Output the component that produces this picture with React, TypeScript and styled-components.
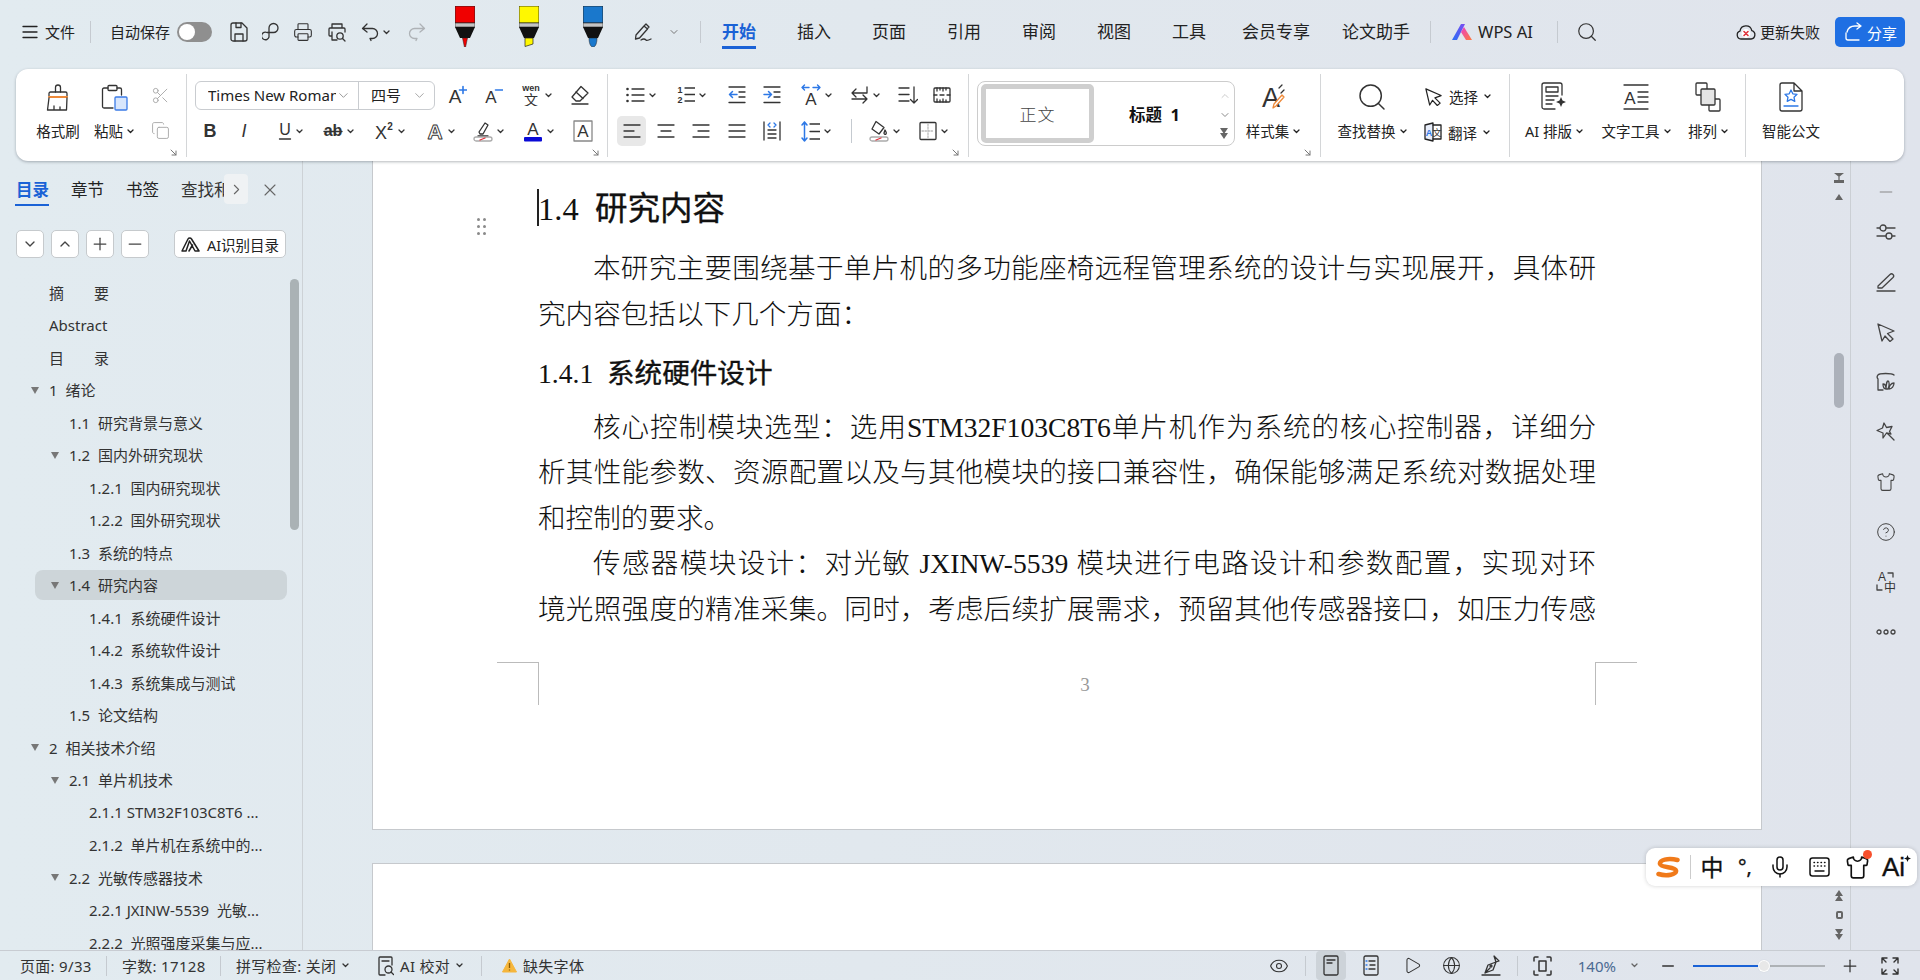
import React from 'react';
import styled, { createGlobalStyle } from 'styled-components';
import {
  ChevronDown,
  ChevronRight,
  ChevronUp,
  CircleHelp,
  Copy,
  Eye,
  Globe,
  Mic,
  Minus,
  Play,
  Plus,
  Printer,
  Scissors,
  Search,
  Shirt,
  X,
} from 'lucide-react';

const SANS = '"Noto Sans", "Noto Sans CJK SC", sans-serif';
const SERIF = '"Liberation Serif", "Noto Sans CJK SC", serif';
const INK = '#333';
const BLUE = '#1a62d6';

const GlobalStyle = createGlobalStyle`
  html, body { margin: 0; padding: 0; height: 100%; overflow: hidden; }
  body { font-family: ${SANS}; color: ${INK}; }
  #root { height: 100%; }
`;

/* ---------- icons ---------- */

const Svg = styled.svg`
  display: block;
  flex-shrink: 0;
  fill: none;
  stroke: currentColor;
  stroke-width: 1.3;
  stroke-linecap: round;
  stroke-linejoin: round;
`;

type IcProps = { w?: number; h?: number; vb?: string; children: React.ReactNode };
const Ic = ({ w = 20, h, vb, children }: IcProps) => (
  <Svg width={w} height={h ?? w} viewBox={vb ?? `0 0 ${w} ${h ?? w}`}>
    {children}
  </Svg>
);

const Glyph = ({ x, y, s = 16, c = INK, w = 400, i, children, o }: {
  x: number; y: number; s?: number; c?: string; w?: number; i?: boolean; o?: boolean; children: React.ReactNode;
}) => (
  <text
    x={x}
    y={y}
    fontSize={s}
    fontWeight={w}
    fontStyle={i ? 'italic' : 'normal'}
    fontFamily='"Liberation Sans", "Noto Sans CJK SC", sans-serif'
    fill={o ? 'none' : c}
    stroke={o ? c : 'none'}
    strokeWidth={o ? 0.9 : 0}
    textAnchor="middle"
  >
    {children}
  </text>
);

const Caret = () => (
  <Ic w={7} h={5}>
    <path d="M1 1l2.5 2.5L6 1" />
  </Ic>
);

const MenuIcon = () => (
  <Ic w={16} h={14}>
    <path d="M1 1.5h14M1 7h14M1 12.500h14" />
  </Ic>
);
const SaveIcon = () => (
  <Ic w={18} h={20}>
    <path d="M3 1h9l5 5v11a2 2 0 0 1-2 2H3a2 2 0 0 1-2-2V3a2 2 0 0 1 2-2z" />
    <path d="M6 1v4.500h5V1M5 19v-7h8v7" />
  </Ic>
);
const KeyIcon = () => (
  <Ic w={18} h={20}>
    <path d="M7 15V6a4.500 4.500 0 1 1 4.500 4.500H5a3.800 3.800 0 1 0 2 4.500" />
  </Ic>
);
const PreviewIcon = () => (
  <Ic w={18} h={20}>
    <path d="M4 6V2h10v4M4 14H2a1 1 0 0 1-1-1V7a1 1 0 0 1 1-1h14a1 1 0 0 1 1 1v3M4 10v8h5" />
    <circle cx="12" cy="14" r="3.200" />
    <path d="M14.500 16.500l2.500 2.500" />
  </Ic>
);
const UndoIcon = () => (
  <Ic w={18} h={20}>
    <path d="M6 2L1.500 6.500 6 10M1.500 6.500h10a5 5 0 0 1 0 10H9l1 2" />
  </Ic>
);
const RedoIcon = () => (
  <Ic w={18} h={20}>
    <path d="M12 2l4.500 4.500L12 10M16.500 6.500h-10a5 5 0 0 0 0 10H9l-1 2" />
  </Ic>
);
const Marker = ({ color, tip }: { color: string; tip: 'fine' | 'chisel' | 'round' }) => (
  <svg width="20" height="41" viewBox="0 0 20 41">
    <rect x="0" y="0" width="20" height="17" fill={color} stroke="#222" strokeWidth="0.8" />
    <rect x="0" y="17" width="20" height="4" fill="#c4c4c4" stroke="#222" strokeWidth="0.6" />
    <path d="M0 21h20l-5 11H5z" fill="#111" />
    {tip === 'fine' && <path d="M7.500 32h5L10.600 41h-1.200z" fill={color} stroke="#222" strokeWidth="0.5" />}
    {tip === 'chisel' && <path d="M6 32h8v6l-8 2.500z" fill={color} stroke="#222" strokeWidth="0.7" />}
    {tip === 'round' && <path d="M6 32h8c0 4-1 9-4 9s-4-5-4-9z" fill={color} stroke="#222" strokeWidth="0.5" />}
  </svg>
);
const PenSquiggle = () => (
  <Ic w={19} h={20}>
    <path d="M3 13L11 4l3.500 3-8 9-4 1zM11 4l2-2 3 3-2 2" />
    <path d="M8 18c3-2 4-1 5 0s3 0 5-1" />
  </Ic>
);
const WpsLogo = () => (
  <svg width="20" height="18" viewBox="0 0 20 18">
    <defs>
      <linearGradient id="wpsL" x1="0" y1="1" x2="1" y2="0">
        <stop offset="0" stopColor="#2b6ff5" />
        <stop offset="1" stopColor="#7a4df0" />
      </linearGradient>
      <linearGradient id="wpsR" x1="0" y1="0" x2="1" y2="1">
        <stop offset="0" stopColor="#e940c8" />
        <stop offset="1" stopColor="#ff7a3c" />
      </linearGradient>
    </defs>
    <path d="M0 17L9 1h4L5 17z" fill="url(#wpsL)" />
    <path d="M9 9l3-5 8 13h-6z" fill="url(#wpsR)" />
  </svg>
);
const CloudFail = () => (
  <Ic w={20} h={18}>
    <path d="M5 16a4 4 0 0 1-1-7.800A6 6 0 0 1 15.800 7.600 4.300 4.300 0 0 1 15 16z" />
    <circle cx="10" cy="10.500" r="4.400" fill="#fff" stroke="none" />
    <path d="M8 8.500l4 4M12 8.500l-4 4" stroke="#e0323c" strokeWidth="1.600" />
  </Ic>
);
const ShareIcon = () => (
  <Ic w={20} h={20}>
    <path d="M3 11v5a2 2 0 0 0 2 2h11" />
    <path d="M4 10c1-4 4-6 8-6h6M14 1l4 3-4 3" />
  </Ic>
);

const BrushIcon = () => (
  <Ic w={24} h={27}>
    <path d="M9.500 8V3.500a2.500 2.500 0 0 1 5 0V8" />
    <path d="M3 12V9.500A1.500 1.500 0 0 1 4.500 8h15A1.500 1.500 0 0 1 21 9.500V12" />
    <path d="M3 13h18" stroke="#ee8a3a" strokeWidth="2" />
    <path d="M3 14L1.500 26h19L21 14M8 26v-4M14 26v-3" />
  </Ic>
);
const PasteIcon = () => (
  <Ic w={27} h={27}>
    <path d="M7 4H3a1.500 1.500 0 0 0-1.500 1.500v17A1.500 1.500 0 0 0 3 24h9M16 4h3a1.500 1.500 0 0 1 1.500 1.500V11" />
    <rect x="7" y="1.500" width="9" height="5" rx="1" />
    <rect x="14" y="13" width="12" height="13" rx="1" fill="#d8e6fc" stroke="#3b7be6" />
  </Ic>
);
const Launcher = () => (
  <Ic w={7} h={7}>
    <path d="M1 1l5 5M6 2v4H2" strokeWidth="1" />
  </Ic>
);
const FontGrowIcon = () => (
  <Ic w={20} h={20}>
    <Glyph x={8} y={18} s={19}>A</Glyph>
    <path d="M12.500 5h7M16 1.500v7" stroke="#2d78e6" strokeWidth="1.600" />
  </Ic>
);
const FontShrinkIcon = () => (
  <Ic w={20} h={20}>
    <Glyph x={8} y={18} s={17}>A</Glyph>
    <path d="M12.500 5h7" stroke="#2d78e6" strokeWidth="1.600" />
  </Ic>
);
const WenIcon = () => (
  <Ic w={20} h={22}>
    <Glyph x={10} y={7} s={9} w={700}>wen</Glyph>
    <Glyph x={10} y={21} s={14}>文</Glyph>
  </Ic>
);
const EraserIcon = () => (
  <Ic w={20} h={20}>
    <path d="M11 1.500l7 6.500-8 8H6l-4-4z" />
    <path d="M6 7l7 6.500M2 19h16" />
  </Ic>
);
const LetterIcon = ({ children, i, w = 700, s = 18 }: { children: React.ReactNode; i?: boolean; w?: number; s?: number }) => (
  <Ic w={16} h={20}>
    <Glyph x={8} y={16} s={s} i={i} w={w}>{children}</Glyph>
  </Ic>
);
const UnderlineIcon = () => (
  <Ic w={14} h={20}>
    <Glyph x={7} y={14} s={16}>U</Glyph>
    <path d="M1.500 18h11" />
  </Ic>
);
const StrikeIcon = () => (
  <Ic w={20} h={20}>
    <Glyph x={10} y={15} s={16} w={700}>ab</Glyph>
    <path d="M1 10.500h18" />
  </Ic>
);
const SuperIcon = () => (
  <Ic w={20} h={20}>
    <Glyph x={7} y={18} s={18}>X</Glyph>
    <Glyph x={16} y={9} s={10} w={700}>2</Glyph>
  </Ic>
);
const OutlineAIcon = () => (
  <Ic w={18} h={20}>
    <Glyph x={9} y={18} s={21} o w={700}>A</Glyph>
  </Ic>
);
const HighlightIcon = () => (
  <Ic w={20} h={22}>
    <path d="M6 12l6-9 3 2-5 9H7zM5 16h10" />
    <rect x="1" y="17" width="18" height="4" rx="2" stroke="#aaa" />
    <path d="M7 20l5-2" stroke="#e0323c" />
  </Ic>
);
const ColorAIcon = () => (
  <Ic w={20} h={22}>
    <Glyph x={10} y={15} s={17}>A</Glyph>
    <rect x="1" y="17" width="18" height="4.500" rx="1" fill="#0a0ad6" stroke="none" />
  </Ic>
);
const BoxAIcon = () => (
  <Ic w={20} h={22}>
    <rect x="1" y="1" width="18" height="20" stroke="#888" />
    <Glyph x={10} y={17} s={17}>A</Glyph>
  </Ic>
);

const BulletsIcon = () => (
  <Ic w={20} h={18}>
    <path d="M7 3h12M7 9h12M7 15h12" />
    <circle cx="2.500" cy="3" r="1.300" fill="currentColor" stroke="none" />
    <circle cx="2.500" cy="9" r="1.300" fill="currentColor" stroke="none" />
    <circle cx="2.500" cy="15" r="1.300" fill="currentColor" stroke="none" />
  </Ic>
);
const NumberedIcon = () => (
  <Ic w={18} h={20}>
    <Glyph x={3} y={8} s={9} w={700}>1</Glyph>
    <Glyph x={3} y={18} s={9} w={700}>2</Glyph>
    <path d="M8 3h10M8 9.500h10M8 16h10" />
  </Ic>
);
const IndentIcon = ({ out }: { out?: boolean }) => (
  <Ic w={18} h={20}>
    <path d="M1 2h16M11 7h6M11 12h6M1 17.500h16" />
    <path d={out ? 'M9 9.500H1.500M4.500 6.500l-3 3 3 3' : 'M1 9.500h7.500M5.500 6.500l3 3-3 3'} stroke="#2d78e6" strokeWidth="1.500" />
  </Ic>
);
const CharWidthIcon = () => (
  <Ic w={20} h={22}>
    <Glyph x={10} y={21} s={17}>A</Glyph>
    <path d="M1 3.500h7M3.500 1L1 3.500 3.500 6M12 3.500h7M16.500 1L19 3.500 16.500 6" stroke="#2d78e6" strokeWidth="1.400" />
  </Ic>
);
const SwapIcon = () => (
  <Ic w={19} h={21}>
    <path d="M17 2v6H2M6 4L2 8l4 4M2 14h15M13 10l4 4-4 4" />
  </Ic>
);
const SortIcon = () => (
  <Ic w={20} h={20}>
    <path d="M1 3h10M1 9.500h10M1 16h10M16 2v16M12.500 14.500L16 18l3.500-3.500" />
  </Ic>
);
const RulerIcon = () => (
  <Ic w={18} h={18}>
    <rect x="1" y="2" width="16" height="14" rx="1" />
    <path d="M4 2v3M7 2v2M10 2v3M13 2v2M4 16v-3M7 16v-2M10 16v-3M13 16v-2M1 9h3M14 9h3M7 9h4" />
  </Ic>
);
const AlignIcon = ({ kind }: { kind: 'left' | 'center' | 'right' | 'justify' }) => {
  const d = {
    left: 'M1 3h16M1 9h10M1 15h16',
    center: 'M1 3h16M4 9h10M1 15h16',
    right: 'M1 3h16M6 9h11M1 15h16',
    justify: 'M1 3h16M1 9h16M1 15h16',
  }[kind];
  return (
    <Ic w={18} h={18}>
      <path d={d} />
    </Ic>
  );
};
const DistributeIcon = () => (
  <Ic w={18} h={20}>
    <path d="M1 1v18M17 1v18M5 9h8M5 13h8M5 17h8" />
    <path d="M7 2L5 4l2 2M11 2l2 2-2 2" stroke="#2d78e6" strokeWidth="1.300" />
  </Ic>
);
const LineSpaceIcon = () => (
  <Ic w={19} h={21}>
    <path d="M9 3h10M9 10.500h10M9 18h10" />
    <path d="M3.500 1v19M1 4l2.500-3L6 4M1 17l2.500 3L6 17" stroke="#2d78e6" strokeWidth="1.500" />
  </Ic>
);
const BucketIcon = () => (
  <Ic w={20} h={22}>
    <path d="M7 1.500l8 6-5 6.500-7-5zM16 10c1 2 2 3 1 4s-2 0-2-1z" />
    <rect x="1" y="17" width="18" height="4" rx="2" stroke="#aaa" />
    <path d="M7 20l5-2" stroke="#e0323c" />
  </Ic>
);
const BorderIcon = () => (
  <Ic w={18} h={20}>
    <rect x="1" y="1.500" width="16" height="17" rx="1" />
    <path d="M9 3v14M3 10h12" stroke="#bbb" strokeDasharray="1.500 1.500" />
  </Ic>
);
const StyleSetIcon = () => (
  <Ic w={24} h={28}>
    <Glyph x={10} y={24} s={27} w={400}>A</Glyph>
    <path d="M12 25l1-4 8-9 2 2-8 9z" fill="#fff" stroke="#ee8a3a" />
    <path d="M18 5l3-3M20 10l3-3" />
  </Ic>
);
const CursorIcon = ({ w = 19 }: { w?: number }) => (
  <Ic w={w} h={w} vb="0 0 20 20">
    <path d="M2 2l16 7-6.500 2.500 5.500 5.500-3 2.500-5-5.500L6 19z" />
  </Ic>
);
const TranslateIcon = () => (
  <Ic w={18} h={20}>
    <path d="M1 3l8-2v18l-8-2z" fill="#e8eefb" />
    <path d="M9 3h8v14H9" />
    <Glyph x={5} y={14} s={9} c="#2d78e6" w={700}>A</Glyph>
    <Glyph x={13} y={14} s={9}>文</Glyph>
  </Ic>
);
const AiLayoutIcon = () => (
  <Ic w={26} h={30}>
    <path d="M14 27H3a2 2 0 0 1-2-2V3a2 2 0 0 1 2-2h16a2 2 0 0 1 2 2v10" />
    <rect x="5" y="5" width="12" height="5" />
    <path d="M5 14h12M5 18h8M5 22h6" />
    <path d="M20 15l1.500 3.500L25 20l-3.500 1.500L20 25l-1.500-3.500L15 20l3.500-1.500z" fill="currentColor" stroke="none" />
  </Ic>
);
const TextToolIcon = () => (
  <Ic w={26} h={28}>
    <path d="M1 2h24M1 26h24M15 9h10M15 14h10M15 19h10" />
    <Glyph x={7} y={21} s={17}>A</Glyph>
  </Ic>
);
const ArrangeIcon = () => (
  <Ic w={26} h={30}>
    <rect x="14" y="17" width="11" height="12" rx="1" />
    <rect x="1" y="1" width="11" height="12" rx="1" />
    <rect x="6" y="7" width="14" height="16" rx="1" fill="#e4e4e4" />
  </Ic>
);
const OfficialDocIcon = () => (
  <Ic w={24} h={30}>
    <path d="M15 1H3a2 2 0 0 0-2 2v24a2 2 0 0 0 2 2h18a2 2 0 0 0 2-2V9zM15 1v8h8" />
    <path d="M12 8l1.800 3.800 4.200.500-3 2.900.800 4.100L12 17.300l-3.800 2 .800-4.100-3-2.900 4.200-.500z" stroke="#2d78e6" />
    <path d="M5 24h14" stroke="#2d78e6" />
  </Ic>
);
const GripIcon = () => (
  <svg width="9" height="17" viewBox="0 0 9 17" fill="#8a8a8a">
    <circle cx="1.500" cy="1.500" r="1.500" />
    <circle cx="7.500" cy="1.500" r="1.500" />
    <circle cx="1.500" cy="8.500" r="1.500" />
    <circle cx="7.500" cy="8.500" r="1.500" />
    <circle cx="1.500" cy="15.500" r="1.500" />
    <circle cx="7.500" cy="15.500" r="1.500" />
  </svg>
);
const AiTreeIcon = () => (
  <Ic w={20} h={16}>
    <path d="M1 15L7 3a2 2 0 0 1 3.500 0L18 15h-4L8.500 5 5 15zM8 15l3.500-6" strokeWidth="1.500" />
  </Ic>
);

const SlidersIcon = () => (
  <Ic w={20} h={18}>
    <path d="M1 5h3M10 5h9M1 13h9M16 13h3" />
    <circle cx="7" cy="5" r="3" />
    <circle cx="13" cy="13" r="3" />
  </Ic>
);
const PenLineIcon = () => (
  <Ic w={20} h={20}>
    <path d="M2 14L14 2.500a2 2 0 0 1 3 3L6 16H2zM1 19h18" />
  </Ic>
);
const ToastIcon = () => (
  <Ic w={20} h={20}>
    <path d="M7 18H2V7a3 3 0 0 1 0-4c1-2 14-2 16 0" />
    <path d="M10 17c0-4 1-8 2-8s2 4 0 8zM13 17c0-3 2-6 5-6 0 3-2 6-5 6zM7 12c2 0 3 2 3 5-2 0-3-2-3-5z" />
  </Ic>
);
const StarPointIcon = () => (
  <Ic w={20} h={20}>
    <path d="M8 1l2.500 4.500 5.500-1-2.500 5 1.500 2.500-4.500-1L7 16V11L1 8.500l5.500-2.500z" />
    <path d="M12 12l6 6" />
  </Ic>
);
const LangIcon = () => (
  <Ic w={20} h={22}>
    <Glyph x={6} y={10} s={12} w={400}>A</Glyph>
    <Glyph x={14} y={21} s={12} w={400}>中</Glyph>
    <path d="M12 2h5v4M1 14v5h5" />
  </Ic>
);
const DotsIcon = () => (
  <Ic w={20} h={6}>
    <circle cx="3" cy="3" r="2" />
    <circle cx="10" cy="3" r="2" />
    <circle cx="17" cy="3" r="2" />
  </Ic>
);
const ChevTop = () => (
  <Ic w={10} h={12}>
    <path d="M0 1h10L5 5z" fill="#666" stroke="none" />
    <path d="M5 5v3" stroke="#666" />
    <path d="M0 8h10v3H0z" fill="#666" stroke="none" />
  </Ic>
);
const Tri = ({ down, double }: { down?: boolean; double?: boolean }) => (
  <Ic w={9} h={double ? 11 : 7}>
    <path d={down ? 'M0 0h8l-4 6z' : 'M4 0l4 6H0z'} fill="#666" stroke="none" />
    {double && <path d={down ? 'M0 5h8l-4 6z' : 'M4 5l4 6H0z'} fill="#666" stroke="none" />}
  </Ic>
);
const DocViewIcon = () => (
  <Ic w={16} h={21}>
    <rect x="1" y="1" width="14" height="19" rx="1.500" />
    <path d="M4 5h8M4 8h5" />
  </Ic>
);
const OutlineViewIcon = () => (
  <Ic w={16} h={21}>
    <rect x="1" y="1" width="14" height="19" rx="1.500" />
    <path d="M6 6h6M7 10h5M6 14h6" />
    <path d="M3 6h1M3 10h1M3 14h1" stroke="#2d78e6" />
  </Ic>
);
const InkPenIcon = () => (
  <Ic w={20} h={21}>
    <path d="M13 1l5 5-3 1-3 8-8 3 3-8 8-3zM4 18l5-5M1 20h18" />
    <circle cx="10" cy="11" r="1" />
  </Ic>
);
const FitIcon = () => (
  <Ic w={19} h={20}>
    <path d="M1 5V2a1 1 0 0 1 1-1h3M14 1h3a1 1 0 0 1 1 1v3M18 15v3a1 1 0 0 1-1 1h-3M5 19H2a1 1 0 0 1-1-1v-3" strokeWidth="1.500" />
    <rect x="6" y="5" width="7" height="10" strokeWidth="1.500" />
  </Ic>
);
const FullIcon = () => (
  <Ic w={18} h={18}>
    <path d="M1 6V1h5M12 1h5v5M17 12v5h-5M6 17H1v-5M1 1l4 4M17 1l-4 4M17 17l-4-4M1 17l4-4" strokeWidth="1.400" />
  </Ic>
);
const ProofIcon = () => (
  <Ic w={16} h={20}>
    <path d="M7 19H2a1 1 0 0 1-1-1V2a1 1 0 0 1 1-1h11a1 1 0 0 1 1 1v7M4 5h7" />
    <circle cx="10.500" cy="13.500" r="3.500" />
    <path d="M13 16l2.500 2.500" />
  </Ic>
);
const WarnIcon = () => (
  <svg width="15" height="15" viewBox="0 0 15 15">
    <path d="M7.500 1L14.500 14H.5z" fill="#f5b63c" stroke="#f5b63c" strokeLinejoin="round" />
    <path d="M7.500 5v5M7.500 11.500v1" stroke="#8a5a00" strokeWidth="1.300" />
  </svg>
);
const SogouLogo = () => (
  <svg width="24" height="24" viewBox="0 0 24 24" fill="none">
    <path d="M21.500 5C12 2.500 3 5 4 9s15 2.500 16 6.500-9 6-17.500 3.500" stroke="#f07a1a" strokeWidth="4.500" strokeLinecap="round" />
  </svg>
);
const KeyboardIcon = () => (
  <Ic w={21} h={20}>
    <rect x="1" y="1" width="19" height="18" rx="2.500" strokeWidth="1.500" />
    <path d="M5 5.500h.5M8.500 5.500h.5M12 5.500h.5M15.500 5.500h.5M5 9h.5M8.500 9h.5M12 9h.5M15.500 9h.5M6 14h9" strokeWidth="1.400" />
  </Ic>
);
const SparkIcon = () => (
  <svg width="7" height="7" viewBox="0 0 7 7" display="block">
    <path d="M3.500 0l1 2.500L7 3.500 4.500 4.500 3.500 7l-1-2.500L0 3.500l2.500-1z" fill="#111" />
  </svg>
);

/* ---------- page shell ---------- */

const Screen = styled.div`
  position: relative;
  width: 1920px;
  height: 980px;
  display: flex;
  flex-direction: column;
  overflow: hidden;
  background: linear-gradient(to right, #e2ebf0 0%, #e1e8ee 45%, #e0e4ec 100%);
`;

const TitleBar = styled.header`
  height: 69px;
  flex-shrink: 0;
  display: flex;
  align-items: center;
  padding: 0 15px 5px 22px;
  box-sizing: border-box;
  font-size: 15px;
  color: #222;
`;
const TitleText = styled.span<{ $ml?: number; $big?: boolean }>`
  margin-left: ${(p) => p.$ml ?? 0}px;
  white-space: nowrap;
  line-height: 20px;
  font-size: ${(p) => (p.$big ? 16.5 : 15)}px;
`;
const VDivider = styled.i<{ $ml?: number; $h?: number }>`
  display: block;
  flex-shrink: 0;
  width: 1px;
  height: ${(p) => p.$h ?? 22}px;
  margin-left: ${(p) => p.$ml ?? 0}px;
  background: #c5cad0;
`;
const Toggle = styled.span`
  position: relative;
  display: block;
  width: 35px;
  height: 20px;
  margin-left: 7px;
  border-radius: 10px;
  background: #8f8f8f;
  &::after {
    content: '';
    position: absolute;
    left: 2px;
    top: 2px;
    width: 16px;
    height: 16px;
    border-radius: 50%;
    background: #fff;
  }
`;
const Slot = styled.div<{ $w: number; $c?: string; $ml?: number }>`
  width: ${(p) => p.$w}px;
  margin-left: ${(p) => p.$ml ?? 0}px;
  flex-shrink: 0;
  display: flex;
  align-items: center;
  justify-content: center;
  gap: 4px;
  color: ${(p) => p.$c ?? INK};
`;
const MarkerSlot = styled.div<{ $ml: number }>`
  margin-left: ${(p) => p.$ml}px;
  align-self: flex-start;
  margin-top: 6px;
  flex-shrink: 0;
`;
const Tab = styled.span<{ $ml?: number; $active?: boolean }>`
  position: relative;
  margin-left: ${(p) => p.$ml ?? 41}px;
  font-size: 17px;
  line-height: 24px;
  white-space: nowrap;
  color: ${(p) => (p.$active ? BLUE : '#222')};
  font-weight: ${(p) => (p.$active ? 700 : 400)};
  ${(p) =>
    p.$active &&
    `&::after {
      content: '';
      position: absolute;
      left: 0;
      right: 0;
      bottom: -5px;
      height: 3px;
      background: ${BLUE};
    }`}
`;
const RightCluster = styled.div`
  margin-left: auto;
  display: flex;
  align-items: center;
`;
const ShareButton = styled.button`
  width: 70px;
  height: 30px;
  margin-left: 15px;
  border: 0;
  border-radius: 5px;
  display: flex;
  align-items: center;
  justify-content: center;
  gap: 4px;
  background: #1f6fe3;
  color: #fff;
  font: 15px ${SANS};
`;

/* ---------- ribbon ---------- */

const Ribbon = styled.section`
  position: relative;
  z-index: 3;
  flex-shrink: 0;
  height: 92px;
  margin: 0 16px;
  display: flex;
  background: #fff;
  border-radius: 12px;
  box-shadow: 0 1px 3px rgba(40, 50, 60, 0.35);
`;
const Group = styled.div<{ $w: number; $pl?: number }>`
  position: relative;
  box-sizing: border-box;
  width: ${(p) => p.$w}px;
  padding-left: ${(p) => p.$pl ?? 0}px;
  display: flex;
  flex-shrink: 0;
`;
const GroupLine = styled.i`
  display: block;
  flex-shrink: 0;
  width: 1px;
  margin: 5px 0 4px;
  background: #d4d6d8;
`;
const Corner = styled.span<{ $r: number }>`
  position: absolute;
  right: ${(p) => p.$r}px;
  bottom: 5px;
  color: #777;
`;
const BigTool = styled.div<{ $w: number; $ml?: number }>`
  width: ${(p) => p.$w}px;
  margin-left: ${(p) => p.$ml ?? 0}px;
  flex-shrink: 0;
  display: flex;
  flex-direction: column;
  align-items: center;
  padding-top: 13px;
  color: ${INK};
`;
const BigIcon = styled.div`
  height: 30px;
  display: flex;
  align-items: center;
  justify-content: center;
`;
const BigLabel = styled.div`
  margin-top: 9px;
  height: 20px;
  display: flex;
  align-items: center;
  gap: 4px;
  font-size: 14.5px;
  line-height: 20px;
  color: #222;
  white-space: nowrap;
`;
const SmallCol = styled.div<{ $w: number }>`
  width: ${(p) => p.$w}px;
  display: flex;
  flex-direction: column;
  align-items: center;
  gap: 16px;
  padding-top: 17px;
`;
const Stack = styled.div`
  display: flex;
  flex-direction: column;
  gap: 6px;
  padding-top: 11px;
`;
const ToolRow = styled.div`
  display: flex;
  align-items: center;
  height: 30px;
`;
const ActiveSlot = styled(Slot)`
  height: 30px;
  border-radius: 5px;
  background: #e8e8e8;
`;
const Combo = styled.div`
  box-sizing: border-box;
  width: 240px;
  height: 29px;
  margin-right: 4px;
  display: flex;
  border: 1px solid #c9ccd0;
  border-radius: 6px;
  font-size: 15px;
`;
const ComboCell = styled.div<{ $w: number; $line?: boolean }>`
  box-sizing: border-box;
  width: ${(p) => p.$w}px;
  padding: 0 7px 0 12px;
  display: flex;
  align-items: center;
  justify-content: space-between;
  border-right: ${(p) => (p.$line ? '1px solid #c9ccd0' : '0')};
  color: #8a8a8a;
`;
const ComboText = styled.span<{ $w: number }>`
  width: ${(p) => p.$w}px;
  overflow: hidden;
  white-space: nowrap;
  color: #222;
  line-height: 27px;
`;
const StyleBox = styled.div`
  box-sizing: border-box;
  width: 258px;
  height: 65px;
  margin-top: 12px;
  padding: 2px 0 2px 3px;
  display: flex;
  border: 1px solid #ccc;
  border-radius: 8px;
`;
const StyleChip = styled.div`
  box-sizing: border-box;
  width: 113px;
  height: 59px;
  display: flex;
  align-items: center;
  justify-content: center;
  border: 5px solid #cfcfcf;
  border-radius: 5px;
  font-size: 17px;
  letter-spacing: 1px;
  font-weight: 300;
  color: #444;
`;
const StyleName = styled.div`
  width: 121px;
  display: flex;
  align-items: center;
  justify-content: center;
  font-size: 16.5px;
  font-weight: 700;
  color: #111;
  white-space: pre;
`;
const StyleArrows = styled.div`
  flex: 1;
  display: flex;
  flex-direction: column;
  align-items: center;
  justify-content: space-between;
  padding: 6px 0 4px;
  color: #8a8a8a;
`;
const InlineTool = styled.div`
  display: flex;
  align-items: center;
  height: 30px;
  gap: 6px;
  font-size: 14.5px;
  color: #222;
  white-space: nowrap;
`;
const InlineCol = styled.div`
  display: flex;
  flex-direction: column;
  gap: 6px;
  padding: 12px 0 0 9px;
`;

/* ---------- body ---------- */

const Body = styled.main`
  flex: 1;
  min-height: 0;
  display: flex;
`;
const Sidebar = styled.aside`
  position: relative;
  isolation: isolate;
  box-sizing: content-box;
  width: 302px;
  flex-shrink: 0;
  overflow: hidden;
  border-right: 1px solid #cdd2d6;
`;
const PanelTabs = styled.div`
  height: 46px;
  box-sizing: border-box;
  padding: 17px 0 0 16px;
  display: flex;
  align-items: flex-start;
  font-size: 16.5px;
  line-height: 24px;
`;
const PanelTab = styled.span<{ $active?: boolean }>`
  position: relative;
  margin-right: 22px;
  white-space: nowrap;
  color: ${(p) => (p.$active ? BLUE : '#222')};
  font-weight: ${(p) => (p.$active ? 700 : 400)};
  ${(p) =>
    p.$active &&
    `&::after {
      content: '';
      position: absolute;
      left: -1px;
      right: 0;
      bottom: -4px;
      height: 2px;
      background: ${BLUE};
    }`}
`;
const ClippedTab = styled.span`
  width: 43px;
  overflow: hidden;
  white-space: nowrap;
`;
const MoreTabs = styled.span`
  width: 24px;
  height: 30px;
  margin-top: -4px;
  display: flex;
  align-items: center;
  justify-content: center;
  border-radius: 4px;
  background: #eff2f4;
  color: #666;
`;
const ClosePanel = styled.span`
  margin: 2px 0 0 12px;
  color: #666;
`;
const OutlineTools = styled.div`
  margin: 23px 0 0 16px;
  display: flex;
  gap: 7px;
`;
const SquareBtn = styled.button`
  box-sizing: border-box;
  width: 28px;
  height: 28px;
  padding: 0;
  display: flex;
  align-items: center;
  justify-content: center;
  background: #fff;
  border: 1px solid #c6cacd;
  border-radius: 5px;
  color: #444;
`;
const AiBtn = styled(SquareBtn)`
  width: 112px;
  margin-left: 18px;
  gap: 6px;
  font: 14.5px ${SANS};
  color: #222;
  white-space: nowrap;
`;
const Tree = styled.div`
  margin-top: 18px;
`;
const TreeRow = styled.div<{ $level: number; $selected?: boolean }>`
  position: relative;
  margin-left: 28px;
  width: 259px;
  height: 32.5px;
  box-sizing: border-box;
  padding-left: ${(p) => p.$level * 20}px;
  display: flex;
  align-items: center;
  font-size: 15px;
  color: #333;
  white-space: pre;
  ${(p) =>
    p.$selected &&
    `&::before {
      content: '';
      position: absolute;
      z-index: -1;
      inset: 1px 0 1px 7px;
      border-radius: 8px;
      background: #cdd5d9;
    }`}
`;
const TreeSlot = styled.span`
  width: 21px;
  flex-shrink: 0;
  display: flex;
  padding-left: 3px;
  box-sizing: border-box;
`;
const TreeCaret = styled.i`
  display: block;
  width: 0;
  height: 0;
  margin-top: 1px;
  border-left: 4.5px solid transparent;
  border-right: 4.5px solid transparent;
  border-top: 7px solid #777;
`;
const TreeThumb = styled.span`
  position: absolute;
  top: 118px;
  right: 3px;
  width: 9px;
  height: 251px;
  border-radius: 5px;
  background: #aab2b5;
`;
const Canvas = styled.div`
  flex: 1;
  min-width: 0;
  display: flex;
  overflow: hidden;
  border-right: 1px solid #cbcfd4;
`;
const PageColumn = styled.div`
  width: 1390px;
  margin-left: 69px;
  flex-shrink: 0;
`;
const Page = styled.article`
  box-sizing: border-box;
  width: 1390px;
  height: 669px;
  padding: 25px 165px 0 165px;
  background: #fff;
  border: 1px solid #c6c9cd;
  border-top: 0;
`;
const NextPage = styled.div`
  box-sizing: border-box;
  width: 1390px;
  height: 400px;
  margin-top: 33px;
  background: #fff;
  border: 1px solid #c6c9cd;
`;
const Heading = styled.h1`
  position: relative;
  margin: 0 0 14px;
  font: 400 32.5px/46px ${SERIF};
  color: #111;
  white-space: pre;
`;
const HeadCjk = styled.span`
  -webkit-text-stroke: 0.35px #111;
`;
const Caretline = styled.i`
  position: absolute;
  left: -1px;
  top: 3px;
  width: 1.5px;
  height: 37px;
  background: #222;
`;
const Grip = styled.span`
  position: absolute;
  left: -61px;
  top: 15px;
`;
const SubHeading = styled.h2`
  margin: 13px 0 8px;
  font: 400 27.6px/46px ${SERIF};
  color: #111;
  white-space: pre;
`;
const DocLine = styled.p<{ $indent?: boolean; $last?: boolean; $lh?: number }>`
  margin: 0;
  font: 300 27.6px/${(p) => p.$lh ?? 45.4}px ${SERIF};
  color: #111;
  text-indent: ${(p) => (p.$indent ? '55px' : '0')};
  text-align: justify;
  text-align-last: ${(p) => (p.$last ? 'left' : 'justify')};
`;
const PageFoot = styled.footer`
  margin: 30px -41px 0 -41px;
  display: flex;
  justify-content: space-between;
  align-items: center;
`;
const CropMark = styled.i<{ $side: 'left' | 'right' }>`
  display: block;
  width: 41px;
  height: 42px;
  border-top: 1px solid #bbb;
  border-${(p) => (p.$side === 'left' ? 'right' : 'left')}: 1px solid #bbb;
`;
const PageNumber = styled.span`
  margin: 3px 0 0 36px;
  font: 19px "Liberation Serif", serif;
  color: #999;
`;
const ScrollCol = styled.div`
  width: 10px;
  margin-left: 72px;
  flex-shrink: 0;
  display: flex;
  flex-direction: column;
  align-items: center;
  padding: 11px 0 10px;
  box-sizing: border-box;
  height: 100%;
`;
const ScrollThumb = styled.span`
  width: 10px;
  height: 55px;
  margin-top: 152px;
  border-radius: 5px;
  background: #acb1ba;
`;
const ScrollFoot = styled.div`
  margin-top: auto;
  display: flex;
  flex-direction: column;
  align-items: center;
  gap: 10px;
  color: #666;
`;
const SmallSquare = styled.i`
  display: block;
  box-sizing: border-box;
  width: 7px;
  height: 8px;
  border: 2px solid #666;
  border-radius: 2px;
`;
const SpacerTri = styled.div`
  margin-top: 10px;
`;
const Rail = styled.nav`
  width: 69px;
  flex-shrink: 0;
  display: flex;
  flex-direction: column;
  align-items: center;
  padding-top: 21px;
  gap: 30px;
  color: #444;
`;
const RailItem = styled.div`
  height: 20px;
  display: flex;
  align-items: center;
  justify-content: center;
  &:first-child {
    margin-bottom: -10px;
  }
`;

/* ---------- status bar ---------- */

const StatusBar = styled.footer`
  height: 30px;
  flex-shrink: 0;
  box-sizing: border-box;
  display: flex;
  align-items: center;
  padding: 0 15px 0 20px;
  border-top: 1px solid #c8ccd2;
  font-size: 15px;
  color: #333;
`;
const StatusText = styled.span<{ $ml?: number; $w?: number }>`
  margin-left: ${(p) => p.$ml ?? 0}px;
  width: ${(p) => (p.$w ? `${p.$w}px` : 'auto')};
  flex-shrink: 0;
  white-space: nowrap;
  letter-spacing: 0.3px;
  display: flex;
  align-items: center;
  gap: 6px;
`;
const ViewActive = styled(Slot)`
  height: 29px;
  background: #cdd3d9;
  border-radius: 4px;
`;
const ZoomValue = styled.span`
  width: 50px;
  text-align: right;
  color: #4b6a92;
  font-size: 15px;
`;
const SliderTrack = styled.div<{ $v: number }>`
  position: relative;
  width: 132px;
  height: 2px;
  margin-left: 9px;
  background: linear-gradient(to right, ${BLUE} ${(p) => p.$v}%, #aeb2b6 ${(p) => p.$v}%);
  &::after {
    content: '';
    position: absolute;
    left: ${(p) => p.$v}%;
    top: -4px;
    margin-left: -5px;
    width: 10px;
    height: 10px;
    border-radius: 50%;
    background: #e8e8e8;
    box-shadow: 0 0 0 1px #fff, 0 0 2px rgba(0, 0, 0, 0.4);
  }
`;

/* ---------- floating IME bar ---------- */

const ImeBar = styled.div`
  position: absolute;
  z-index: 5;
  left: 1646px;
  top: 848px;
  width: 271px;
  height: 38px;
  box-sizing: border-box;
  display: flex;
  align-items: center;
  padding-left: 10px;
  background: #fff;
  border-radius: 9px;
  box-shadow: 0 0 4px rgba(0, 0, 0, 0.18);
  color: #111;
`;
const ImeLine = styled.i`
  display: block;
  flex-shrink: 0;
  width: 1px;
  height: 24px;
  margin: 0 9px 0 10px;
  background: #ccc;
`;
const ImeChar = styled.span<{ $w: number; $size?: number; $font?: string }>`
  position: relative;
  width: ${(p) => p.$w}px;
  flex-shrink: 0;
  display: flex;
  justify-content: center;
  font-size: ${(p) => p.$size ?? 20}px;
  font-family: ${(p) => p.$font ?? SANS};
  -webkit-text-stroke: 0.3px #111;
  line-height: 26px;
`;
const ImeSlot = styled.span<{ $w: number }>`
  position: relative;
  width: ${(p) => p.$w}px;
  flex-shrink: 0;
  display: flex;
  justify-content: center;
`;
const RedDot = styled.i`
  position: absolute;
  top: -5px;
  right: -2px;
  width: 9px;
  height: 9px;
  border-radius: 50%;
  background: #f8502d;
`;
const ImeSpark = styled.span`
  position: absolute;
  top: 1px;
  right: 6px;
  line-height: 0;
`;

/* ---------- data ---------- */

const TREE: { t: string; l: number; open?: boolean; sel?: boolean }[] = [
  { t: '摘\u3000\u3000要', l: 0 },
  { t: 'Abstract', l: 0 },
  { t: '目\u3000\u3000录', l: 0 },
  { t: '1  绪论', l: 0, open: true },
  { t: '1.1  研究背景与意义', l: 1 },
  { t: '1.2  国内外研究现状', l: 1, open: true },
  { t: '1.2.1  国内研究现状', l: 2 },
  { t: '1.2.2  国外研究现状', l: 2 },
  { t: '1.3  系统的特点', l: 1 },
  { t: '1.4  研究内容', l: 1, open: true, sel: true },
  { t: '1.4.1  系统硬件设计', l: 2 },
  { t: '1.4.2  系统软件设计', l: 2 },
  { t: '1.4.3  系统集成与测试', l: 2 },
  { t: '1.5  论文结构', l: 1 },
  { t: '2  相关技术介绍', l: 0, open: true },
  { t: '2.1  单片机技术', l: 1, open: true },
  { t: '2.1.1 STM32F103C8T6 ...', l: 2 },
  { t: '2.1.2  单片机在系统中的...', l: 2 },
  { t: '2.2  光敏传感器技术', l: 1, open: true },
  { t: '2.2.1 JXINW-5539  光敏...', l: 2 },
  { t: '2.2.2  光照强度采集与应...', l: 2 },
];

// full-width punctuation, written as escapes so it survives editors
const DOC = {
  p1a: '本研究主要围绕基于单片机的多功能座椅远程管理系统的设计与实现展开\uFF0C具体研',
  p1b: '究内容包括以下几个方面\uFF1A',
  p2a: '核心控制模块选型\uFF1A选用STM32F103C8T6单片机作为系统的核心控制器\uFF0C详细分',
  p2b: '析其性能参数\u3001资源配置以及与其他模块的接口兼容性\uFF0C确保能够满足系统对数据处理',
  p2c: '和控制的要求\u3002',
  p3a: '传感器模块设计\uFF1A对光敏 JXINW-5539 模块进行电路设计和参数配置\uFF0C实现对环',
  p3b: '境光照强度的精准采集\u3002同时\uFF0C考虑后续扩展需求\uFF0C预留其他传感器接口\uFF0C如压力传感',
};

const RAIL = [
  <Minus key="m" size={20} strokeWidth={1.2} color="#888" />,
  <SlidersIcon key="s" />,
  <PenLineIcon key="p" />,
  <CursorIcon key="c" w={20} />,
  <ToastIcon key="t" />,
  <StarPointIcon key="st" />,
  <Shirt key="sh" size={20} strokeWidth={1.3} />,
  <CircleHelp key="h" size={20} strokeWidth={1.2} />,
  <LangIcon key="l" />,
  <DotsIcon key="d" />,
];

const App = () => {
  return (
    <Screen>
      <GlobalStyle />
      <TitleBar>
        <MenuIcon />
        <TitleText $ml={7}>文件</TitleText>
        <VDivider $ml={15} />
        <TitleText $ml={19}>自动保存</TitleText>
        <Toggle />
        <Slot $w={36} $ml={9}><SaveIcon /></Slot>
        <Slot $w={27}><KeyIcon /></Slot>
        <Slot $w={38}><Printer size={20} strokeWidth={1.3} /></Slot>
        <Slot $w={29}><PreviewIcon /></Slot>
        <Slot $w={48}><UndoIcon /><Caret /></Slot>
        <Slot $w={36} $c="#aeb2b6"><RedoIcon /></Slot>
        <MarkerSlot $ml={20}><Marker color="#f00000" tip="fine" /></MarkerSlot>
        <MarkerSlot $ml={44}><Marker color="#fff800" tip="chisel" /></MarkerSlot>
        <MarkerSlot $ml={44}><Marker color="#1a78cc" tip="round" /></MarkerSlot>
        <Slot $w={19} $ml={30}><PenSquiggle /></Slot>
        <Slot $w={12} $ml={16} $c="#777"><ChevronDown size={14} /></Slot>
        <VDivider $ml={20} />
        <Tab $ml={21} $active>开始</Tab>
        <Tab>插入</Tab>
        <Tab>页面</Tab>
        <Tab>引用</Tab>
        <Tab>审阅</Tab>
        <Tab>视图</Tab>
        <Tab>工具</Tab>
        <Tab $ml={36}>会员专享</Tab>
        <Tab $ml={32}>论文助手</Tab>
        <VDivider $ml={20} />
        <Slot $w={20} $ml={21}><WpsLogo /></Slot>
        <TitleText $ml={6} $big>WPS AI</TitleText>
        <VDivider $ml={24} />
        <Slot $w={22} $ml={18}><Search size={22} strokeWidth={1.3} /></Slot>
        <RightCluster>
          <CloudFail />
          <TitleText $ml={4}>更新失败</TitleText>
          <ShareButton><ShareIcon />分享</ShareButton>
        </RightCluster>
      </TitleBar>

      <Ribbon>
        <Group $w={170} $pl={14}>
          <BigTool $w={56}>
            <BigIcon><BrushIcon /></BigIcon>
            <BigLabel>格式刷</BigLabel>
          </BigTool>
          <BigTool $w={56}>
            <BigIcon><PasteIcon /></BigIcon>
            <BigLabel>粘贴<Caret /></BigLabel>
          </BigTool>
          <SmallCol $w={36}>
            <Slot $w={36} $c="#aaa"><Scissors size={19} strokeWidth={1.2} /></Slot>
            <Slot $w={36} $c="#aaa"><Copy size={19} strokeWidth={1.2} /></Slot>
          </SmallCol>
          <Corner $r={9}><Launcher /></Corner>
        </Group>
        <GroupLine />
        <Group $w={420} $pl={8}>
          <Stack>
            <ToolRow>
              <Combo>
                <ComboCell $w={163} $line>
                  <ComboText $w={129}>Times New Roman</ComboText>
                  <ChevronDown size={15} strokeWidth={1.4} />
                </ComboCell>
                <ComboCell $w={75}>
                  <ComboText $w={32}>四号</ComboText>
                  <ChevronDown size={15} strokeWidth={1.2} />
                </ComboCell>
              </Combo>
              <Slot $w={36}><FontGrowIcon /></Slot>
              <Slot $w={36}><FontShrinkIcon /></Slot>
              <Slot $w={50}><WenIcon /><Caret /></Slot>
              <Slot $w={38}><EraserIcon /></Slot>
            </ToolRow>
            <ToolRow>
              <Slot $w={29}><LetterIcon>B</LetterIcon></Slot>
              <Slot $w={40}><LetterIcon i w={400}>I</LetterIcon></Slot>
              <Slot $w={52}><UnderlineIcon /><Caret /></Slot>
              <Slot $w={44}><StrikeIcon /><Caret /></Slot>
              <Slot $w={58}><SuperIcon /><Caret /></Slot>
              <Slot $w={44}><OutlineAIcon /><Caret /></Slot>
              <Slot $w={52}><HighlightIcon /><Caret /></Slot>
              <Slot $w={49}><ColorAIcon /><Caret /></Slot>
              <Slot $w={40}><BoxAIcon /></Slot>
            </ToolRow>
          </Stack>
          <Corner $r={8}><Launcher /></Corner>
        </Group>
        <GroupLine />
        <Group $w={360} $pl={9}>
          <Stack>
            <ToolRow>
              <Slot $w={46}><BulletsIcon /><Caret /></Slot>
              <Slot $w={56}><NumberedIcon /><Caret /></Slot>
              <Slot $w={36}><IndentIcon out /></Slot>
              <Slot $w={34}><IndentIcon /></Slot>
              <Slot $w={54}><CharWidthIcon /><Caret /></Slot>
              <Slot $w={44}><SwapIcon /><Caret /></Slot>
              <Slot $w={42}><SortIcon /></Slot>
              <Slot $w={26}><RulerIcon /></Slot>
            </ToolRow>
            <ToolRow>
              <ActiveSlot $w={29}><AlignIcon kind="left" /></ActiveSlot>
              <Slot $w={40}><AlignIcon kind="center" /></Slot>
              <Slot $w={30}><AlignIcon kind="right" /></Slot>
              <Slot $w={42}><AlignIcon kind="justify" /></Slot>
              <Slot $w={28}><DistributeIcon /></Slot>
              <Slot $w={60}><LineSpaceIcon /><Caret /></Slot>
              <VDivider $ml={5} $h={24} />
              <Slot $w={64}><BucketIcon /><Caret /></Slot>
              <Slot $w={34}><BorderIcon /><Caret /></Slot>
            </ToolRow>
          </Stack>
          <Corner $r={9}><Launcher /></Corner>
        </Group>
        <GroupLine />
        <Group $w={351} $pl={8}>
          <StyleBox>
            <StyleChip>正文</StyleChip>
            <StyleName>标题  1</StyleName>
            <StyleArrows>
              <ChevronUp size={12} color="#ccc" />
              <ChevronDown size={12} />
              <Tri down double />
            </StyleArrows>
          </StyleBox>
          <BigTool $w={76}>
            <BigIcon><StyleSetIcon /></BigIcon>
            <BigLabel>样式集<Caret /></BigLabel>
          </BigTool>
          <Corner $r={9}><Launcher /></Corner>
        </Group>
        <GroupLine />
        <Group $w={188} $pl={8}>
          <BigTool $w={86}>
            <BigIcon><Search size={32} strokeWidth={1.1} /></BigIcon>
            <BigLabel>查找替换<Caret /></BigLabel>
          </BigTool>
          <InlineCol>
            <InlineTool><CursorIcon />选择<Caret /></InlineTool>
            <InlineTool><TranslateIcon />翻译<Caret /></InlineTool>
          </InlineCol>
        </Group>
        <GroupLine />
        <Group $w={235} $pl={8}>
          <BigTool $w={72}>
            <BigIcon><AiLayoutIcon /></BigIcon>
            <BigLabel>AI 排版<Caret /></BigLabel>
          </BigTool>
          <BigTool $w={92}>
            <BigIcon><TextToolIcon /></BigIcon>
            <BigLabel>文字工具<Caret /></BigLabel>
          </BigTool>
          <BigTool $w={52}>
            <BigIcon><ArrangeIcon /></BigIcon>
            <BigLabel>排列<Caret /></BigLabel>
          </BigTool>
        </Group>
        <GroupLine />
        <Group $w={158}>
          <BigTool $w={90}>
            <BigIcon><OfficialDocIcon /></BigIcon>
            <BigLabel>智能公文</BigLabel>
          </BigTool>
        </Group>
      </Ribbon>

      <Body>
        <Sidebar>
          <PanelTabs>
            <PanelTab $active>目录</PanelTab>
            <PanelTab>章节</PanelTab>
            <PanelTab>书签</PanelTab>
            <ClippedTab>查找和替换</ClippedTab>
            <MoreTabs><ChevronRight size={17} strokeWidth={1.5} /></MoreTabs>
            <ClosePanel><X size={20} strokeWidth={1.3} /></ClosePanel>
          </PanelTabs>
          <OutlineTools>
            <SquareBtn><ChevronDown size={16} /></SquareBtn>
            <SquareBtn><ChevronUp size={16} /></SquareBtn>
            <SquareBtn><Plus size={20} strokeWidth={1.5} /></SquareBtn>
            <SquareBtn><Minus size={20} strokeWidth={1.5} /></SquareBtn>
            <AiBtn><AiTreeIcon />AI识别目录</AiBtn>
          </OutlineTools>
          <Tree>
            {TREE.map((row) => (
              <TreeRow key={row.t} $level={row.l} $selected={row.sel}>
                <TreeSlot>{row.open && <TreeCaret />}</TreeSlot>
                {row.t}
              </TreeRow>
            ))}
          </Tree>
          <TreeThumb />
        </Sidebar>

        <Canvas>
          <PageColumn>
            <Page>
              <Heading>
                <Caretline />
                <Grip><GripIcon /></Grip>
                1.4  <HeadCjk>研究内容</HeadCjk>
              </Heading>
              <DocLine $indent $lh={46}>{DOC.p1a}</DocLine>
              <DocLine $last $lh={46}>{DOC.p1b}</DocLine>
              <SubHeading>1.4.1  <HeadCjk>系统硬件设计</HeadCjk></SubHeading>
              <DocLine $indent>{DOC.p2a}</DocLine>
              <DocLine>{DOC.p2b}</DocLine>
              <DocLine $last>{DOC.p2c}</DocLine>
              <DocLine $indent>{DOC.p3a}</DocLine>
              <DocLine>{DOC.p3b}</DocLine>
              <PageFoot>
                <CropMark $side="left" />
                <PageNumber>3</PageNumber>
                <CropMark $side="right" />
              </PageFoot>
            </Page>
            <NextPage />
          </PageColumn>
          <ScrollCol>
            <ChevTop />
            <SpacerTri><Tri /></SpacerTri>
            <ScrollThumb />
            <ScrollFoot>
              <Tri double />
              <SmallSquare />
              <Tri down double />
            </ScrollFoot>
          </ScrollCol>
        </Canvas>

        <Rail>
          {RAIL.map((icon, i) => (
            <RailItem key={i}>{icon}</RailItem>
          ))}
        </Rail>
      </Body>

      <StatusBar>
        <StatusText $w={71}>页面: 9/33</StatusText>
        <VDivider $ml={15} $h={20} />
        <StatusText $ml={15} $w={83}>字数: 17128</StatusText>
        <VDivider $ml={15} $h={20} />
        <StatusText $ml={15} $w={116}>拼写检查: 关闭<Caret /></StatusText>
        <StatusText $ml={26} $w={88}><ProofIcon />AI 校对<Caret /></StatusText>
        <VDivider $ml={15} $h={20} />
        <StatusText $ml={20}><WarnIcon />缺失字体</StatusText>
        <RightCluster>
          <Slot $w={30}><Eye size={20} strokeWidth={1.3} /></Slot>
          <VDivider $ml={11} $h={20} />
          <ViewActive $w={30} $ml={10}><DocViewIcon /></ViewActive>
          <Slot $w={50}><OutlineViewIcon /></Slot>
          <Slot $w={32}><Play size={19} strokeWidth={1.3} /></Slot>
          <Slot $w={46}><Globe size={19} strokeWidth={1.3} /></Slot>
          <Slot $w={34}><InkPenIcon /></Slot>
          <VDivider $ml={9} $h={20} />
          <Slot $w={48}><FitIcon /></Slot>
          <ZoomValue>140%</ZoomValue>
          <Slot $w={36} $c="#666"><Caret /></Slot>
          <Slot $w={32}><Minus size={18} strokeWidth={2} /></Slot>
          <SliderTrack $v={54} />
          <Slot $w={50}><Plus size={20} strokeWidth={1.5} /></Slot>
          <Slot $w={30}><FullIcon /></Slot>
        </RightCluster>
      </StatusBar>

      <ImeBar>
        <SogouLogo />
        <ImeLine />
        <ImeChar $w={24} $size={23}>中</ImeChar>
        <ImeChar $w={42} $size={20}>°,</ImeChar>
        <ImeSlot $w={28}><Mic size={24} strokeWidth={1.5} /></ImeSlot>
        <ImeSlot $w={50}><KeyboardIcon /></ImeSlot>
        <ImeSlot $w={26}><Shirt size={25} strokeWidth={1.6} /><RedDot /></ImeSlot>
        <ImeChar $w={47} $size={26} $font='"Liberation Sans", sans-serif'>
          Ai
          <ImeSpark><SparkIcon /></ImeSpark>
        </ImeChar>
      </ImeBar>
    </Screen>
  );
};

export default App;
